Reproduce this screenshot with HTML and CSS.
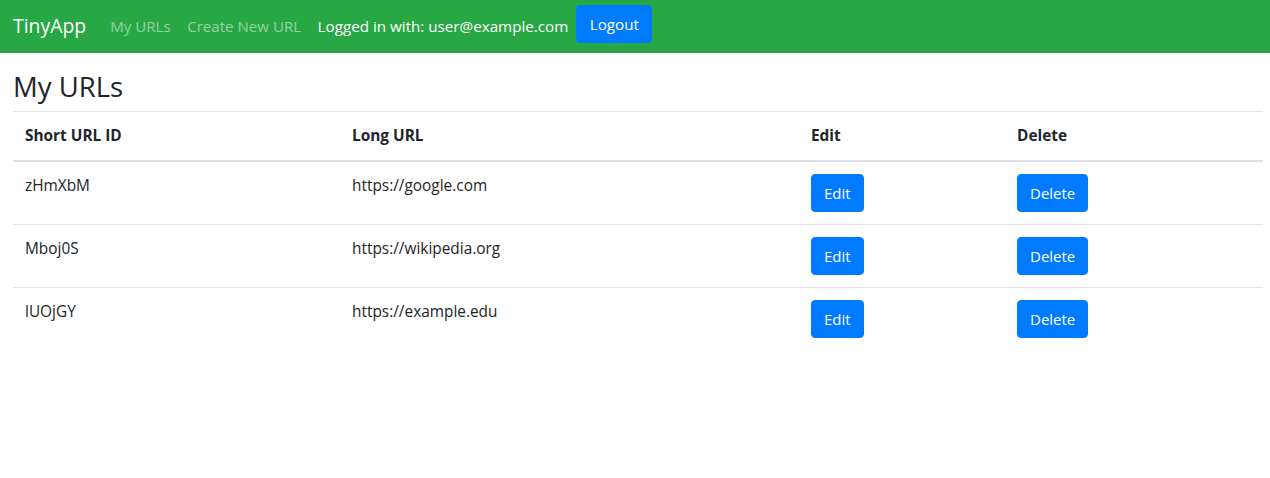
FILE: index.html
```html
<!DOCTYPE html>
<html lang="en">
<head>
<meta charset="utf-8">
<title>TinyApp</title>
<link rel="stylesheet" href="styles.css">
</head>
<body>
<nav class="navbar">
  <a class="brand" href="#">TinyApp</a>
  <a class="nav-link" href="#">My URLs</a>
  <a class="nav-link" href="#">Create New URL</a>
  <span class="nav-user">Logged in with: user@example.com</span>
  <button class="btn btn-logout">Logout</button>
</nav>
<main class="content">
  <h3 class="title">My URLs</h3>
  <table class="urls">
    <thead>
      <tr>
        <th class="c1">Short URL ID</th>
        <th class="c2">Long URL</th>
        <th class="c3">Edit</th>
        <th class="c4">Delete</th>
      </tr>
    </thead>
    <tbody>
      <tr>
        <td>zHmXbM</td>
        <td>https://google.com</td>
        <td><button class="btn">Edit</button></td>
        <td><button class="btn">Delete</button></td>
      </tr>
      <tr>
        <td>Mboj0S</td>
        <td>https://wikipedia.org</td>
        <td><button class="btn">Edit</button></td>
        <td><button class="btn">Delete</button></td>
      </tr>
      <tr>
        <td>lUOjGY</td>
        <td>https://example.edu</td>
        <td><button class="btn">Edit</button></td>
        <td><button class="btn">Delete</button></td>
      </tr>
    </tbody>
  </table>
</main>
</body>
</html>
```
FILE: styles.css
```css
* { box-sizing: border-box; }
body {
  margin: 0;
  font-family: "Open Sans", "Noto Sans", sans-serif;
  font-size: 16px;
  line-height: 1.5;
  color: #212529;
  background: #fff;
}
.navbar {
  display: flex;
  align-items: flex-start;
  height: 53px;
  background: #28a745;
  padding: 5px 13px 0 13px;
}
.navbar a { text-decoration: none; }
.brand {
  color: #fff;
  font-size: 19.4px;
  line-height: 38px;
  padding-top: 2px;
  margin-right: 24px;
}
.nav-link {
  color: rgba(255,255,255,0.5);
  font-size: 15.1px;
  line-height: 38px;
  padding-top: 2px;
  margin-right: 16.5px;
}
.nav-user {
  color: #fff;
  font-size: 15.2px;
  line-height: 38px;
  padding-top: 2px;
  margin-right: 8px;
}
.btn {
  font-family: inherit;
  background: #007bff;
  color: #fff;
  border: 1px solid #007bff;
  border-radius: 4px;
  font-size: 15px;
  line-height: 24px;
  padding: 6px 12px;
  cursor: pointer;
}
.btn-logout {
  padding: 6px 12.5px;
  font-size: 15.2px;
}
.content {
  padding: 0 7px 0 13px;
}
.title {
  font-size: 27.5px;
  font-weight: 500;
  line-height: 33px;
  margin: 17px 0 8px 0;
}
.urls {
  width: 100%;
  border-collapse: separate;
  border-spacing: 0;
  table-layout: fixed;
}
.urls th, .urls td {
  text-align: left;
  vertical-align: top;
  padding: 12px;
  font-size: 15.4px;
  line-height: 24px;
}
.urls th {
  font-weight: 700;
  border-top: 1px solid #dee2e6;
  border-bottom: 2px solid #dee2e6;
}
.urls tbody tr + tr td {
  border-top: 1px solid #dee2e6;
}
.urls td .btn { font-size: 15px; }
.c1 { width: 327px; }
.c2 { width: 459px; }
.c3 { width: 206px; }
.c4 { width: 258px; }
```
